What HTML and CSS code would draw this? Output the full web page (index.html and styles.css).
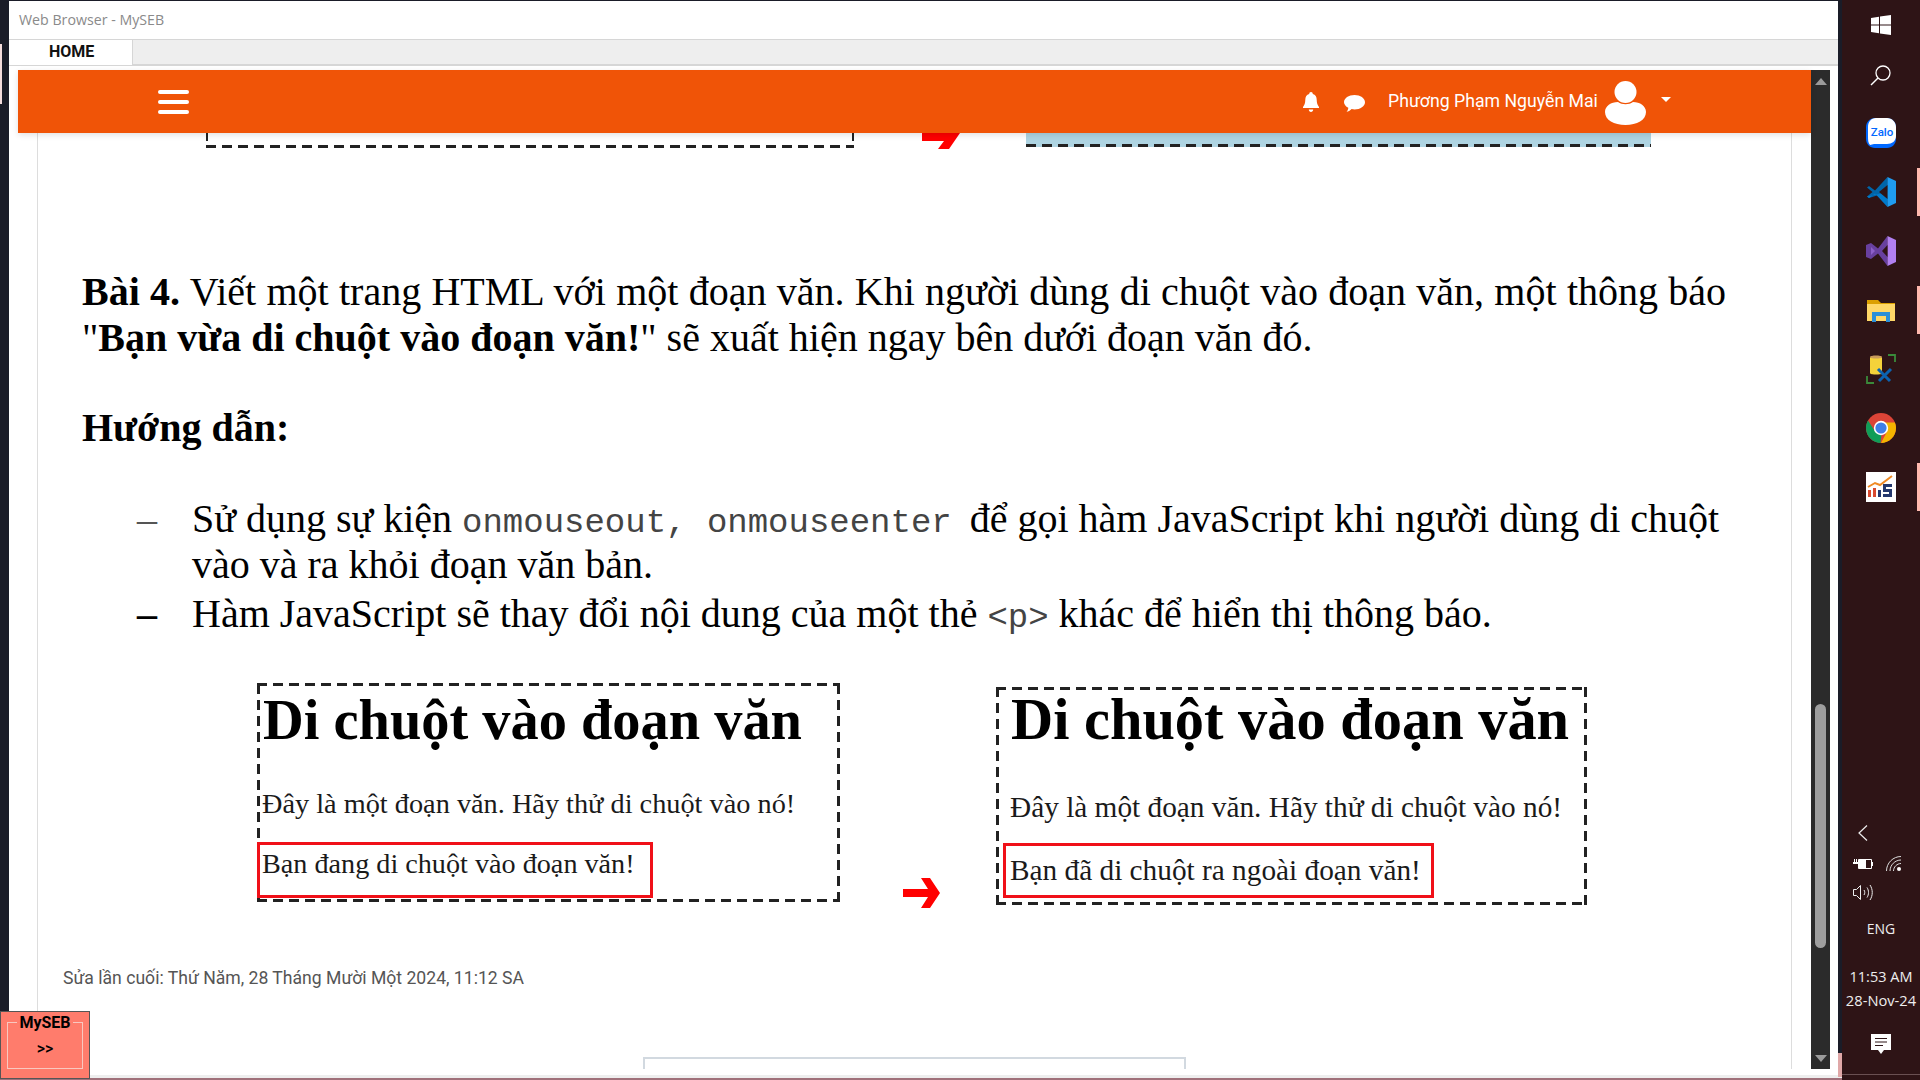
FILE: index.html
```html
<!DOCTYPE html>
<html lang="vi">
<head>
    <meta charset="UTF-8">
    <meta name="viewport" content="width=device-width, initial-scale=1.0">
    <title>Web Browser - MySEB</title>
    <link rel="stylesheet" href="styles.css">
</head>
<body>
    <div class="window">
        <div class="titlebar">Web Browser - MySEB</div>
        <div class="tabs">
            <div class="tab">HOME</div>
        </div>
        <div class="main">
            <div class="page">
                <div class="navbar">
                    <div class="burger"><span></span><span></span><span></span></div>
                    <div class="nav-right">
                        <svg class="bell" viewBox="0 0 20 20"><path fill="#fff" d="M10 0c1.1 0 1.8.8 1.8 1.9 2.7.7 3.9 3 3.9 5.8 0 3.400.9 5.300 2.300 7.300v1H2v-1c1.400-2 2.300-3.900 2.300-7.300 0-2.800 1.200-5.100 3.900-5.800C8.200.8 8.900 0 10 0zM7.800 17.500h4.400c0 1.400-1 2.500-2.200 2.500s-2.200-1.100-2.200-2.500z"/></svg>
                        <svg class="bubble" viewBox="0 0 21 17"><path fill="#fff" d="M10.500 0C16.300 0 21 3.200 21 7.200s-4.700 7.200-10.500 7.200c-1 0-2-.1-2.900-.3C6.300 15.600 4 16.800 2.500 17c1-1.100 1.700-2.600 1.800-4.300C1.700 11.400 0 9.400 0 7.200 0 3.200 4.700 0 10.500 0z"/></svg>
                        <span class="username">Phương Phạm Nguyễn Mai</span>
                        <svg class="avatar" viewBox="0 0 41 44"><circle cx="20.500" cy="11" r="11" fill="#fff"/><path fill="#fff" d="M13 21c4 3 11 3 15 0 7 0 13 4 13 10 0 8-9 13-20.500 13S0 39 0 31c0-6 6-10 13-10z"/></svg>
                        <span class="caret"></span>
                    </div>
                </div>
                <div class="doc">
                    <div class="clip-row">
                        <div class="clip-left"></div>
                        <svg class="clip-arrow" viewBox="0 0 38 16"><path fill="#f00" d="M0 0h38l-11 16H16l6-8H0z"/></svg>
                        <div class="clip-right"></div>
                    </div>

                    <p class="task"><span class="task-first"><b>Bài 4.</b> Viết một trang HTML với một đoạn văn. Khi người dùng di chuột vào đoạn văn, một thông báo</span><br>"<b>Bạn vừa di chuột vào đoạn văn!</b>" sẽ xuất hiện ngay bên dưới đoạn văn đó.</p>
                    <p class="guide"><b>Hướng dẫn:</b></p>

                    <ul class="steps">
                        <li><span class="dash thin">–</span><span>Sử dụng sự kiện <code class="events">onmouseout, onmouseenter</code> để gọi hàm JavaScript khi người dùng di chuột<br>vào và ra khỏi đoạn văn bản.</span></li>
                        <li><span class="dash">–</span><span>Hàm JavaScript sẽ thay đổi nội dung của một thẻ <code>&lt;p&gt;</code> khác để hiển thị thông báo.</span></li>
                    </ul>

                    <div class="figures">
                        <div class="fig fig-left">
                            <h1>Di chuột vào đoạn văn</h1>
                            <p>Đây là một đoạn văn. Hãy thử di chuột vào nó!</p>
                            <div class="msg">Bạn đang di chuột vào đoạn văn!</div>
                        </div>
                        <svg class="fig-arrow" viewBox="0 0 37 30"><path fill="#f00" d="M18 0h9l10 15-10 15h-9l7-11H0v-8h25z"/></svg>
                        <div class="fig fig-right">
                            <h1>Di chuột vào đoạn văn</h1>
                            <p>Đây là một đoạn văn. Hãy thử di chuột vào nó!</p>
                            <div class="msg">Bạn đã di chuột ra ngoài đoạn văn!</div>
                        </div>
                    </div>

                    <div class="modified">Sửa lần cuối: Thứ Năm, 28 Tháng Mười Một 2024, 11:12 SA</div>
                    <div class="next-box"></div>
                </div>
            </div>
            <div class="scrollbar">
                <span class="arrow-up"></span>
                <div class="track"><div class="thumb"></div></div>
                <span class="arrow-down"></span>
            </div>
        </div>
    </div>

    <div class="taskbar">
        <div class="top-slot">
            <svg width="20" height="20" viewBox="0 0 20 20"><path fill="#fff" d="M0 3l8-1.200v7.700H0zM9 1.600L20 0v9.500H9zM0 10.500h8v7.700L0 17zM9 10.500h11V20L9 18.400z"/></svg>
        </div>
        <div class="top-slot">
            <svg width="21" height="21" viewBox="0 0 21 21"><circle cx="13" cy="8" r="7" fill="none" stroke="#fff" stroke-width="1.300"/><path stroke="#fff" stroke-width="1.500" d="M8 13L1 20"/></svg>
        </div>
        <div class="apps">
            <div class="slot">
                <svg width="30" height="30" viewBox="0 0 30 30"><path fill="#0068ff" d="M9 0h12c5 0 9 4 9 9v12c0 5-4 9-9 9H9c-5 0-9-4-9-9V9c0-5 4-9 9-9z"/><path fill="#fff" d="M10 0h11c5 0 9 4 9 9v9c0 5-4 8-9 8H8l-4 1C2 25 2 22 2 18V9c0-5 3-9 8-9z"/><text x="16" y="17.500" class="zalo">Zalo</text></svg>
            </div>
            <div class="slot active">
                <svg width="30" height="30" viewBox="0 0 30 30"><path fill="#0065a9" d="M1 10.500L3 9l6 4.500L21.500 0 22 15 3 21l-2-1.500 5.500-4.500z"/><path fill="#007acc" d="M1 19.500L3 21l6-4.500L21.500 30 22 15z"/><path fill="#1f9cf0" d="M21.500 0L30 4v22l-8.500 4z"/><path fill="#2e1416" d="M21.500 8L13 15l8.500 7z"/></svg>
            </div>
            <div class="slot">
                <svg width="30" height="30" viewBox="0 0 30 30"><path fill="#68409f" d="M0 9l5-2 7 5.500L21.500 0v30L12 17.500 5 23l-5-2z"/><path fill="#8c5fc9" d="M5 11l4 4-4 4z"/><path fill="#b180f0" d="M21.500 0L30 4v22l-8.500 4z"/><path fill="#2e1416" d="M21.500 9L16 15l5.500 6z"/></svg>
            </div>
            <div class="slot active">
                <svg width="28" height="24" viewBox="0 0 28 24"><path fill="#dca000" d="M0 2h11l3 3h14v5H0z"/><path fill="#ffd868" d="M0 6h28v17H0z"/><path fill="#2a8fd8" d="M5 14h18v10h-4v-6H9v6H5z"/></svg>
            </div>
            <div class="slot">
                <svg width="30" height="30" viewBox="0 0 30 30"><path fill="#f5d23a" d="M4 4c0-2 12-2 12 0v15c0 2-12 2-12 0z"/><path fill="#c89a5a" d="M4 3c0-2 12-2 12 0s-12 2-12 0z"/><path fill="none" stroke="#3a8a3a" stroke-width="1.800" d="M22 1h7v7M1 22v7h7"/><path stroke="#0c63b0" stroke-width="3" d="M12 15l12 12M25 15L13 27"/></svg>
            </div>
            <div class="slot">
                <svg width="30" height="30" viewBox="0 0 30 30"><circle cx="15" cy="15" r="15" fill="#db4437"/><path fill="#0f9d58" d="M15 30C6.700 30 0 23.300 0 15c0-2.700.7-5.300 2-7.500L9.500 19l6 2-1 9z"/><path fill="#f4b400" d="M15 30c8.300 0 15-6.700 15-15 0-2-.4-4-1.200-5.500H15l5.500 10z"/><circle cx="15" cy="15" r="7.200" fill="#fff"/><circle cx="15" cy="15" r="5.600" fill="#3f7fe8"/></svg>
            </div>
            <div class="slot active">
                <svg width="30" height="30" viewBox="0 0 30 30"><path fill="#fff" d="M0 0h30v30H0z"/><path fill="none" stroke="#f08a24" stroke-width="2" d="M2 15l7-4 5 2 12-9"/><path fill="#d84a30" d="M2 18h3v7H2zM7 16h3v9H7z"/><path fill="#24386e" d="M12 18h3v7h-3zM17 12h9v3h-6v2h6v8h-9v-3h6v-2h-6z"/></svg>
            </div>
        </div>
        <div class="tray">
            <svg class="tray-chevron" width="10" height="16" viewBox="0 0 10 16"><path fill="none" stroke="#eee" stroke-width="1.200" d="M9 0.500L1 8l8 7.500"/></svg>
            <div class="tray-row">
                <svg width="20" height="13" viewBox="0 0 20 13"><path fill="none" stroke="#fff" d="M5.500 2.500h13v9h-13z"/><path fill="#fff" d="M6 3h7v8H6zM19 5h1v4h-1zM0 5h5v2H0zM1 2h1v3H1zM3 2h1v3H3z"/></svg>
                <svg width="15" height="15" viewBox="0 0 15 15"><path fill="none" stroke="#ddd" d="M.5 15C.5 7 7 .5 15 .5M4 15C4 9 9 4 15 4M7.500 15c0-4 3.500-7.500 7.500-7.500"/><circle cx="13" cy="13" r="2" fill="#fff"/></svg>
            </div>
            <svg class="tray-speaker" width="20" height="17" viewBox="0 0 20 17"><path fill="none" stroke="#eee" d="M.5 5.500h3l4-4v14l-4-4h-3zM11 6c1 1.500 1 3.500 0 5M14 3.500c2 3 2 7 0 10M17 1c3 4.500 3 10.500 0 15"/></svg>
            <div class="tray-lang">ENG</div>
            <div class="tray-time">11:53 AM</div>
            <div class="tray-date">28-Nov-24</div>
            <svg class="tray-note" width="20" height="20" viewBox="0 0 20 20"><path fill="#fff" d="M0 0h20v16h-7l-3 4-3-4H0z"/><path stroke="#2e1416" d="M4 4.500h12M4 8h12M4 11.500h8"/></svg>
        </div>
    </div>

    <div class="edge"></div>
    <div class="sliver"></div>
    <div class="left-mark"></div>

    <div class="myseb">
        <fieldset class="myseb-box">
            <legend>MySEB</legend>
            <div class="myseb-more">&gt;&gt;</div>
        </fieldset>
    </div>
</body>
</html>
```

FILE: styles.css
```css
* {
    box-sizing: border-box;
}

html, body {
    margin: 0;
    height: 1080px;
    overflow: hidden;
}

body {
    display: flex;
    padding-left: 9px;
    background-color: #1a1c28;
    font-family: "Liberation Serif", serif;
    color: #000;
}

.window {
    width: 1829px;
    height: 1075px;
    margin-top: 1px;
    margin-right: 4px;
    background-color: #fff;
    display: flex;
    flex-direction: column;
}

.titlebar {
    height: 38px;
    padding-left: 10px;
    line-height: 38px;
    font-family: "Open Sans", sans-serif;
    font-size: 14.2px;
    color: #8a8a8a;
}

.tabs {
    height: 27px;
    background-color: #eee;
    border-top: 1px solid #d6d6d6;
    border-bottom: 2px solid #d6d6d6;
}

.tab {
    width: 124px;
    height: 26px;
    margin-top: -1px;
    padding-left: 40px;
    background-color: #fff;
    border-top: 1px solid #d6d6d6;
    border-right: 1px solid #d6d6d6;
    font-family: Roboto, sans-serif;
    font-weight: 700;
    font-size: 16px;
    line-height: 24px;
    color: #111;
}

.main {
    flex: 1;
    min-height: 0;
    display: flex;
    margin-top: 4px;
    margin-left: 9px;
    margin-bottom: 7px;
}

.page {
    width: 1793px;
    display: flex;
    flex-direction: column;
}

.navbar {
    height: 63px;
    flex-shrink: 0;
    background-color: #f05407;
    box-shadow: 0 2px 6px rgba(0, 0, 0, 0.12);
    display: flex;
    align-items: center;
    justify-content: space-between;
    padding-left: 140px;
    padding-right: 140px;
    position: relative;
}

.burger {
    width: 31px;
    display: flex;
    flex-direction: column;
    gap: 6px;
}

.burger span {
    height: 4px;
    border-radius: 2px;
    background-color: #fff;
}

.nav-right {
    display: flex;
    align-items: center;
    color: #fff;
}

.bell {
    width: 20px;
    height: 20px;
    margin-top: 1px;
    margin-right: 1px;
}

.bubble {
    width: 21px;
    height: 17px;
    margin-left: 22px;
    margin-top: 3px;
    margin-right: 1px;
}

.username {
    margin-left: 22px;
    margin-bottom: 2px;
    font-family: Roboto, sans-serif;
    font-size: 17.7px;
    width: 217px;
    white-space: nowrap;
}

.avatar {
    width: 41px;
    height: 44px;
    margin-top: 2px;
}

.caret {
    margin-left: 15px;
    margin-bottom: 5px;
    border-left: 5px solid transparent;
    border-right: 5px solid transparent;
    border-top: 5px solid #fff;
}

.doc {
    flex: 1;
    min-height: 0;
    overflow: hidden;
    margin-left: 19px;
    margin-right: 19px;
    border-left: 1px solid #ddd;
    border-right: 1px solid #ddd;
}

.clip-row {
    display: flex;
    height: 15px;
}

.clip-left {
    width: 648px;
    margin-left: 168px;
    background-image:
        repeating-linear-gradient(90deg, #222 0 10px, transparent 10px 16px),
        linear-gradient(#222, #222),
        linear-gradient(#222, #222);
    background-size: 100% 3px, 2px 8px, 2px 8px;
    background-position: left bottom, left top, right top;
    background-repeat: no-repeat;
}

.clip-arrow {
    width: 38px;
    height: 16px;
    margin-left: 68px;
}

.clip-right {
    width: 625px;
    height: 14px;
    margin-left: 66px;
    background-color: #aed4e2;
    background-image: repeating-linear-gradient(90deg, #222 0 10px, transparent 10px 16px);
    background-size: 100% 3px;
    background-position: left bottom;
    background-repeat: no-repeat;
}

.task, .guide {
    margin: 0;
    padding-left: 44px;
    font-size: 40px;
    line-height: 46px;
    white-space: nowrap;
}

.task {
    margin-top: 121px;
}

.task-first {
    word-spacing: 0.3px;
}

.guide {
    margin-top: 44px;
}

.steps {
    list-style: none;
    margin: 45px 0 0;
    padding-left: 99px;
    font-size: 40px;
    line-height: 46px;
    white-space: nowrap;
}

.steps li {
    display: flex;
}

.steps li + li {
    margin-top: 3px;
}

.dash {
    width: 55px;
    flex-shrink: 0;
    font-weight: 700;
}

.dash.thin {
    font-weight: 400;
    color: #555;
}

code {
    font-family: "Liberation Mono", monospace;
    font-size: 34px;
    line-height: 1;
    color: #444;
}

.events {
    margin-right: 8px;
}

.figures {
    display: flex;
    align-items: flex-start;
    margin-top: 46px;
}

.fig {
    padding: 2px;
    flex-shrink: 0;
    color: #1a1a1a;
    background-image:
        repeating-linear-gradient(90deg, #222 0 10px, transparent 10px 16px),
        repeating-linear-gradient(90deg, #222 0 10px, transparent 10px 16px),
        repeating-linear-gradient(0deg, #222 0 10px, transparent 10px 16px),
        repeating-linear-gradient(0deg, #222 0 10px, transparent 10px 16px);
    background-size: 100% 3px, 100% 3px, 3px 100%, 3px 100%;
    background-position: left top, left bottom, left top, right top;
    background-repeat: no-repeat;
}

.fig h1 {
    margin: 0;
    white-space: nowrap;
    line-height: 60px;
    color: #000;
}

.fig p {
    margin: 0;
    white-space: nowrap;
}

.msg {
    border: 3px solid #f01018;
    white-space: nowrap;
}

.fig-left {
    width: 583px;
    height: 219px;
    margin-left: 219px;
}

.fig-left h1 {
    font-size: 56.4px;
    margin-top: 5px;
    margin-left: 4px;
}

.fig-left p {
    font-size: 28.3px;
    line-height: 32px;
    margin-top: 38px;
    margin-left: 3px;
}

.fig-left .msg {
    width: 396px;
    height: 56px;
    margin-top: 22px;
    margin-left: -2px;
    padding: 3px 0 0 2px;
    font-size: 28.2px;
    line-height: 32px;
}

.fig-arrow {
    width: 37px;
    height: 30px;
    margin-top: 195px;
    margin-left: 63px;
    flex-shrink: 0;
}

.fig-right {
    width: 591px;
    height: 218px;
    margin-top: 4px;
    margin-left: 56px;
}

.fig-right h1 {
    font-size: 58.4px;
    margin-top: 1px;
    margin-left: 13px;
}

.fig-right p {
    font-size: 29.3px;
    line-height: 34px;
    margin-top: 40px;
    margin-left: 12px;
}

.fig-right .msg {
    width: 431px;
    height: 55px;
    margin-top: 19px;
    margin-left: 5px;
    padding: 7px 0 0 4px;
    font-size: 29.3px;
    line-height: 34px;
}

.modified {
    margin-top: 60px;
    margin-left: 25px;
    font-family: Roboto, sans-serif;
    font-size: 17.6px;
    line-height: 20px;
    color: #555;
}

.next-box {
    width: 543px;
    height: 20px;
    margin-top: 69px;
    margin-left: 605px;
    border: 2px solid #d2d9e0;
}

.scrollbar {
    width: 19px;
    background-color: #2b2b2b;
    display: flex;
    flex-direction: column;
    align-items: center;
}

.arrow-up {
    margin-top: 8px;
    border-left: 6px solid transparent;
    border-right: 6px solid transparent;
    border-bottom: 7px solid #9a9a9a;
}

.arrow-down {
    margin-bottom: 7px;
    border-left: 6px solid transparent;
    border-right: 6px solid transparent;
    border-top: 7px solid #9a9a9a;
}

.track {
    flex: 1;
    width: 100%;
    display: flex;
    flex-direction: column;
    align-items: center;
    justify-content: flex-end;
}

.thumb {
    width: 11px;
    height: 244px;
    margin-bottom: 107px;
    border-radius: 6px;
    background-color: #9e9e9e;
}

.taskbar {
    width: 78px;
    flex-shrink: 0;
    height: 1080px;
    background-color: #2e1416;
    display: flex;
    flex-direction: column;
    font-family: "Open Sans", sans-serif;
    color: #eee;
}

.top-slot {
    height: 50px;
    display: flex;
    align-items: center;
    justify-content: center;
    padding-right: 1px;
}

.apps {
    margin-top: 3px;
}

.slot {
    height: 59px;
    display: flex;
    align-items: center;
    justify-content: center;
    position: relative;
    padding-right: 1px;
}

.slot.active::after {
    content: "";
    position: absolute;
    top: 6px;
    right: 0;
    width: 3px;
    height: 48px;
    background-color: #ffb9ae;
}

.zalo {
    font-family: Roboto, sans-serif;
    font-size: 11.5px;
    font-weight: 500;
    fill: #0068ff;
    text-anchor: middle;
}

.tray {
    margin-top: 309px;
    display: flex;
    flex-direction: column;
    border-bottom: 1px solid #6a5052;
    height: 250px;
}

.tray-chevron {
    margin-left: 16px;
    flex-shrink: 0;
}

.tray-row {
    display: flex;
    gap: 13px;
    margin-top: 15px;
    margin-left: 11px;
    align-items: center;
}

.tray-speaker {
    margin-top: 13px;
    margin-left: 11px;
    flex-shrink: 0;
}

.tray-lang {
    margin-top: 18px;
    font-size: 14px;
    line-height: 20px;
    text-align: center;
}

.tray-time {
    margin-top: 27px;
    font-size: 14.5px;
    line-height: 22px;
    text-align: center;
}

.tray-date {
    margin-top: 1px;
    font-size: 14.7px;
    line-height: 22px;
    text-align: center;
}

.tray-note {
    margin-top: 23px;
    margin-left: 29px;
    flex-shrink: 0;
}

.edge {
    position: absolute;
    left: 0;
    bottom: 0;
    width: 1842px;
    height: 5px;
    background-color: #eee;
    border-bottom: 2px solid #a0707a;
}

.sliver {
    position: absolute;
    left: 1838px;
    top: 1053px;
    width: 4px;
    height: 24px;
    background-color: #e0a8a8;
}

.left-mark {
    position: absolute;
    left: 0;
    top: 44px;
    width: 2px;
    height: 60px;
    background-color: #f4dcdc;
}

.myseb {
    position: absolute;
    left: 0;
    top: 1011px;
    width: 90px;
    height: 68px;
    padding: 3px 6px 9px 6px;
    background-color: #ff7c6c;
    border: 1px solid #555;
}

.myseb-box {
    height: 100%;
    margin: 0;
    padding: 0;
    border: 1px solid #f8c8c0;
    text-align: center;
}

.myseb-box legend {
    padding: 0 2px;
    margin: 0 auto;
    font-family: Roboto, sans-serif;
    font-weight: 700;
    font-size: 16px;
    line-height: 15px;
}

.myseb-more {
    margin-top: 9px;
    font-family: Roboto, sans-serif;
    font-weight: 500;
    font-size: 16px;
}
```
